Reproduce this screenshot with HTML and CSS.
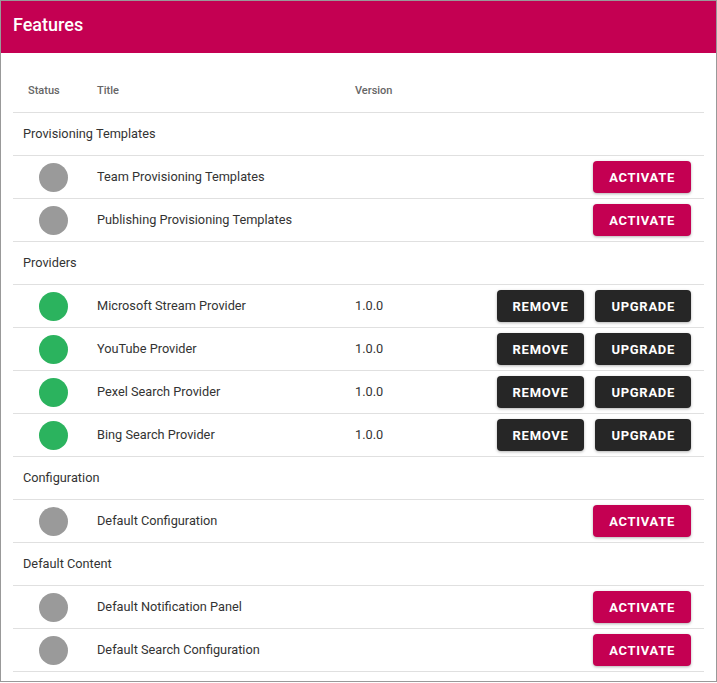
FILE: index.html
```html
<!DOCTYPE html>
<html>
<head>
<meta charset="utf-8">
<link rel="stylesheet" href="styles.css">
</head>
<body>
<div class="panel">
  <div class="panel-header">Features</div>
  <div class="panel-body">
    <div class="table">
      <div class="row head">
        <div class="c-status">Status</div>
        <div class="c-title">Title</div>
        <div class="c-version">Version</div>
        <div class="c-actions"></div>
      </div>

      <div class="group">Provisioning Templates</div>
      <div class="row">
        <div class="c-status"><span class="dot off"></span></div>
        <div class="c-title">Team Provisioning Templates</div>
        <div class="c-version"></div>
        <div class="c-actions"><button class="btn primary">Activate</button></div>
      </div>
      <div class="row">
        <div class="c-status"><span class="dot off"></span></div>
        <div class="c-title">Publishing Provisioning Templates</div>
        <div class="c-version"></div>
        <div class="c-actions"><button class="btn primary">Activate</button></div>
      </div>

      <div class="group">Providers</div>
      <div class="row">
        <div class="c-status"><span class="dot on"></span></div>
        <div class="c-title">Microsoft Stream Provider</div>
        <div class="c-version">1.0.0</div>
        <div class="c-actions"><button class="btn dark">Remove</button><button class="btn dark">Upgrade</button></div>
      </div>
      <div class="row">
        <div class="c-status"><span class="dot on"></span></div>
        <div class="c-title">YouTube Provider</div>
        <div class="c-version">1.0.0</div>
        <div class="c-actions"><button class="btn dark">Remove</button><button class="btn dark">Upgrade</button></div>
      </div>
      <div class="row">
        <div class="c-status"><span class="dot on"></span></div>
        <div class="c-title">Pexel Search Provider</div>
        <div class="c-version">1.0.0</div>
        <div class="c-actions"><button class="btn dark">Remove</button><button class="btn dark">Upgrade</button></div>
      </div>
      <div class="row">
        <div class="c-status"><span class="dot on"></span></div>
        <div class="c-title">Bing Search Provider</div>
        <div class="c-version">1.0.0</div>
        <div class="c-actions"><button class="btn dark">Remove</button><button class="btn dark">Upgrade</button></div>
      </div>

      <div class="group">Configuration</div>
      <div class="row">
        <div class="c-status"><span class="dot off"></span></div>
        <div class="c-title">Default Configuration</div>
        <div class="c-version"></div>
        <div class="c-actions"><button class="btn primary">Activate</button></div>
      </div>

      <div class="group">Default Content</div>
      <div class="row">
        <div class="c-status"><span class="dot off"></span></div>
        <div class="c-title">Default Notification Panel</div>
        <div class="c-version"></div>
        <div class="c-actions"><button class="btn primary">Activate</button></div>
      </div>
      <div class="row">
        <div class="c-status"><span class="dot off"></span></div>
        <div class="c-title">Default Search Configuration</div>
        <div class="c-version"></div>
        <div class="c-actions"><button class="btn primary">Activate</button></div>
      </div>
    </div>
  </div>
</div>
</body>
</html>
```

FILE: styles.css
```css
* { box-sizing: border-box; }
html, body { margin: 0; padding: 0; background: #fff; }
body { font-family: Roboto, "Liberation Sans", Arial, sans-serif; color: #333; }

.panel {
  width: 717px;
  height: 682px;
  border: 1px solid #999;
  background: #fff;
}

.panel-header {
  height: 52px;
  background: #c40052;
  color: #fff;
  font-size: 18px;
  font-weight: 500;
  padding: 0 12px 6px 12px;
  display: flex;
  align-items: center;
}

.panel-body {
  padding: 17px 12px 10px 12px;
}

.table { width: 691px; }

.row {
  display: grid;
  grid-template-columns: 84px 258px 1fr auto;
  align-items: center;
  height: 43px;
  border-bottom: 1px solid #e0e0e0;
  font-size: 12.75px;
  color: #333;
}

.c-title, .c-version { padding-bottom: 2px; }

.row.head {
  font-size: 11px;
  font-weight: 500;
  color: #666;
}

.row.head .c-status { padding-left: 15px; padding-bottom: 2px; }

.c-status { padding-left: 26px; display: flex; align-items: center; }

.dot {
  width: 29px;
  height: 29px;
  border-radius: 50%;
  display: block;
}
.dot.off { background: #9a9a9a; }
.dot.on { background: #2bb35e; }

.c-actions {
  display: flex;
  gap: 11px;
  padding-right: 13px;
  justify-content: flex-end;
}

.group {
  height: 43px;
  border-bottom: 1px solid #e0e0e0;
  display: flex;
  align-items: center;
  padding-left: 10px;
  padding-bottom: 2px;
  font-size: 12.75px;
  color: #333;
}

.btn {
  height: 32px;
  border: none;
  border-radius: 4px;
  padding: 0 16px;
  font-family: Roboto, "Liberation Sans", Arial, sans-serif;
  font-size: 13px;
  font-weight: 700;
  letter-spacing: 0.7px;
  text-transform: uppercase;
  color: #fff;
  box-shadow: 0 1px 3px rgba(0,0,0,0.3);
  cursor: pointer;
}
.btn.primary { background: #c40052; }
.btn.dark { background: #262626; }
```
